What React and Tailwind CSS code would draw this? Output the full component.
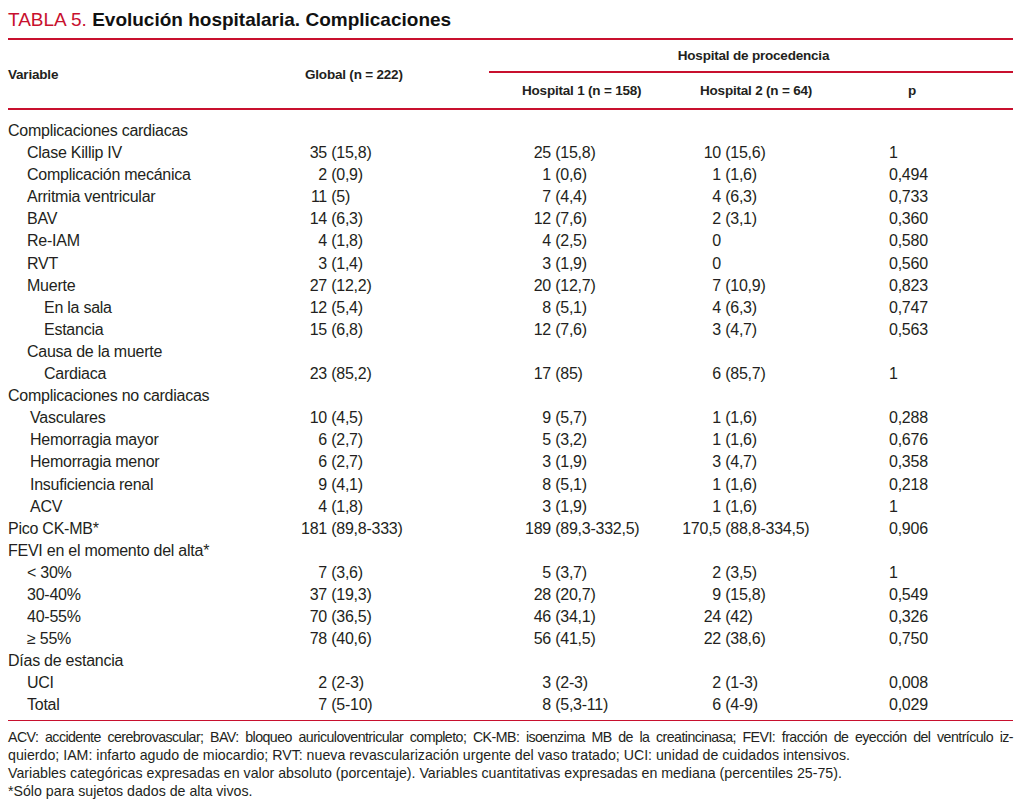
const sans = { fontFamily: '"Liberation Sans", Arial, sans-serif' };

// level: 0 = section, 1 = item, 2 = sub-item; 1.1 = item with the slightly deeper indent of the source
const rows = [
  [0, "Complicaciones cardiacas"],
  [1, "Clase Killip IV", "35 (15,8)", "25 (15,8)", "10 (15,6)", "1"],
  [1, "Complicación mecánica", "2 (0,9)", "1 (0,6)", "1 (1,6)", "0,494"],
  [1, "Arritmia ventricular", "11 (5)", "7 (4,4)", "4 (6,3)", "0,733"],
  [1, "BAV", "14 (6,3)", "12 (7,6)", "2 (3,1)", "0,360"],
  [1, "Re-IAM", "4 (1,8)", "4 (2,5)", "0", "0,580"],
  [1, "RVT", "3 (1,4)", "3 (1,9)", "0", "0,560"],
  [1, "Muerte", "27 (12,2)", "20 (12,7)", "7 (10,9)", "0,823"],
  [2, "En la sala", "12 (5,4)", "8 (5,1)", "4 (6,3)", "0,747"],
  [2, "Estancia", "15 (6,8)", "12 (7,6)", "3 (4,7)", "0,563"],
  [1, "Causa de la muerte"],
  [2, "Cardiaca", "23 (85,2)", "17 (85)", "6 (85,7)", "1"],
  [0, "Complicaciones no cardiacas"],
  [1.1, "Vasculares", "10 (4,5)", "9 (5,7)", "1 (1,6)", "0,288"],
  [1.1, "Hemorragia mayor", "6 (2,7)", "5 (3,2)", "1 (1,6)", "0,676"],
  [1.1, "Hemorragia menor", "6 (2,7)", "3 (1,9)", "3 (4,7)", "0,358"],
  [1.1, "Insuficiencia renal", "9 (4,1)", "8 (5,1)", "1 (1,6)", "0,218"],
  [1.1, "ACV", "4 (1,8)", "3 (1,9)", "1 (1,6)", "1"],
  [0, "Pico CK-MB*", "181 (89,8-333)", "189 (89,3-332,5)", "170,5 (88,8-334,5)", "0,906"],
  [0, "FEVI en el momento del alta*"],
  [1, "< 30%", "7 (3,6)", "5 (3,7)", "2 (3,5)", "1"],
  [1, "30-40%", "37 (19,3)", "28 (20,7)", "9 (15,8)", "0,549"],
  [1, "40-55%", "70 (36,5)", "46 (34,1)", "24 (42)", "0,326"],
  [1, "≥ 55%", "78 (40,6)", "56 (41,5)", "22 (38,6)", "0,750"],
  [0, "Días de estancia"],
  [1, "UCI", "2 (2-3)", "3 (2-3)", "2 (1-3)", "0,008"],
  [1, "Total", "7 (5-10)", "8 (5,3-11)", "6 (4-9)", "0,029"],
];

const indent = {
  0: "pl-0",
  1: "pl-[19px]",
  1.1: "pl-[22px]",
  2: "pl-[36px]",
};

// first number right-aligned, the rest follows
function Num({ value, lead, width }) {
  if (!value) return <div className={width} />;
  const i = value.indexOf(" ");
  const first = i === -1 ? value : value.slice(0, i);
  const rest = i === -1 ? "" : value.slice(i);
  return (
    <div className={`${width} shrink-0 flex whitespace-pre`}>
      <span className={`${lead} shrink-0 text-right`}>{first}</span>
      <span>{rest}</span>
    </div>
  );
}

export default function App() {
  return (
    <div className="w-[1024px] h-[812px] bg-white text-[#231f20]" style={sans}>
      <div className="ml-2 w-[1005px] pt-[6px]">
        {/* Title */}
        <h1 className="text-[19px] leading-[28px] h-[32px] whitespace-nowrap">
          <span className="text-[#c8102e]">TABLA 5. </span>
          <span className="font-bold text-[#111]">Evolución hospitalaria. Complicaciones</span>
        </h1>
        <div className="h-[2px] bg-[#c8102e]" />

        {/* Header */}
        <div className="flex h-[68px] font-bold text-[13.5px] tracking-[-0.2px] whitespace-nowrap">
          <div className="w-[272px] shrink-0 flex items-center pt-[3px]">Variable</div>
          <div className="w-[200px] shrink-0 flex items-center pt-[3px] pl-[25px]">Global (n = 222)</div>
          <div className="flex-1 flex flex-col">
            <div className="h-[31px] shrink-0 flex items-center justify-center pl-[14px] pt-[2px]">
              Hospital de procedencia
            </div>
            <div className="h-[2px] shrink-0 ml-[9px] bg-[#c8102e]" />
            <div className="flex-1 flex items-center pt-[1px]">
              <div className="w-[170px] shrink-0 pl-[42px]">Hospital 1 (n = 158)</div>
              <div className="w-[239px] shrink-0 pl-[50px]">Hospital 2 (n = 64)</div>
              <div className="pl-[19px]">p</div>
            </div>
          </div>
        </div>
        <div className="h-[2px] bg-[#c8102e]" />

        {/* Body */}
        <div className="pt-[10px] pb-[3px] text-[16px] tracking-[-0.25px]">
          {rows.map(([level, label, g, h1, h2, p], idx) => (
            <div key={idx} className="flex h-[22.1px] leading-[22px] whitespace-nowrap">
              <div className={`w-[272px] shrink-0 ${indent[level]}`}>{label}</div>
              <Num value={g} width="w-[200px]" lead="w-[47px]" />
              <Num value={h1} width="w-[170px]" lead="w-[71px]" />
              <Num value={h2} width="w-[239px]" lead="w-[71px]" />
              <div>{p}</div>
            </div>
          ))}
        </div>
        <div className="h-[1.5px] bg-[#c8102e]" />

        {/* Notes */}
        <div className="pt-[7px] text-[14.2px] leading-[18px] text-[#231f20]">
          <p className="[text-align-last:justify] text-justify tracking-[-0.55px]">
            ACV: accidente cerebrovascular; BAV: bloqueo auriculoventricular completo; CK-MB: isoenzima MB de la creatincinasa; FEVI: fracción de eyección del ventrículo iz-
          </p>
          <p className="whitespace-nowrap">
            quierdo; IAM: infarto agudo de miocardio; RVT: nueva revascularización urgente del vaso tratado; UCI: unidad de cuidados intensivos.
          </p>
          <p className="whitespace-nowrap">
            Variables categóricas expresadas en valor absoluto (porcentaje). Variables cuantitativas expresadas en mediana (percentiles 25-75).
          </p>
          <p className="whitespace-nowrap">*Sólo para sujetos dados de alta vivos.</p>
        </div>
      </div>
    </div>
  );
}
